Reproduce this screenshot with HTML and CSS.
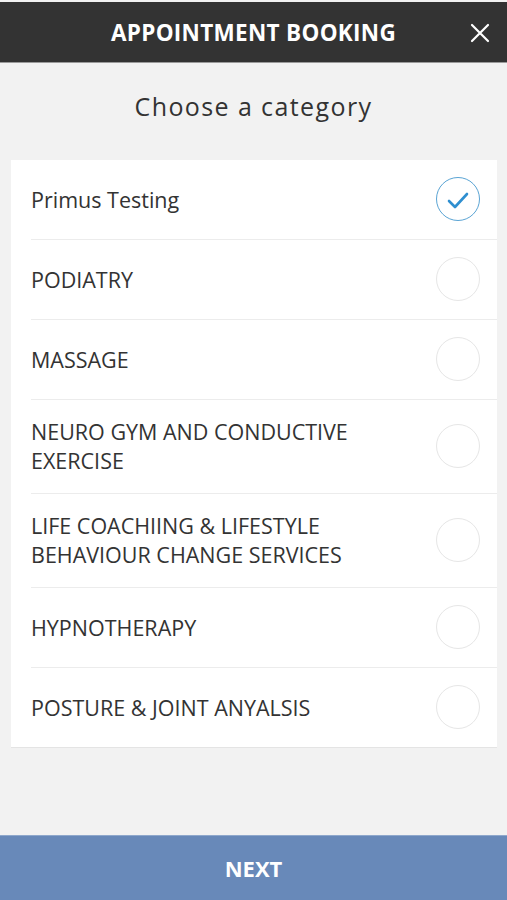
FILE: index.html
```html
<!DOCTYPE html>
<html lang="en">
<head>
    <meta charset="UTF-8">
    <meta name="viewport" content="width=device-width, initial-scale=1.0">
    <title>Appointment Booking</title>
    <link rel="stylesheet" href="styles.css">
</head>
<body>
    <div class="page">
        <header class="topbar">
            <h1 class="topbar-title">APPOINTMENT BOOKING</h1>
            <button class="close" aria-label="Close">
                <svg width="20" height="20" viewBox="0 0 20 20">
                    <path d="M2 2 L18 18 M18 2 L2 18" stroke="#fff" stroke-width="2.2" stroke-linecap="round"/>
                </svg>
            </button>
        </header>

        <h2 class="heading">Choose a category</h2>

        <ul class="list">
            <li class="item selected">
                <span class="label">Primus Testing</span>
                <span class="radio">
                    <svg width="24" height="24" viewBox="0 0 24 24">
                        <path d="M3 13 L9 19 L21 6" fill="none" stroke="#2f8fd0" stroke-width="2.6" stroke-linecap="round" stroke-linejoin="round"/>
                    </svg>
                </span>
            </li>
            <li class="item"><span class="label">PODIATRY</span><span class="radio"></span></li>
            <li class="item"><span class="label">MASSAGE</span><span class="radio"></span></li>
            <li class="item"><span class="label">NEURO GYM AND CONDUCTIVE<br>EXERCISE</span><span class="radio"></span></li>
            <li class="item"><span class="label">LIFE COACHIING &amp; LIFESTYLE<br>BEHAVIOUR CHANGE SERVICES</span><span class="radio"></span></li>
            <li class="item"><span class="label">HYPNOTHERAPY</span><span class="radio"></span></li>
            <li class="item"><span class="label">POSTURE &amp; JOINT ANYALSIS</span><span class="radio"></span></li>
        </ul>

        <button class="next">NEXT</button>
    </div>
</body>
</html>
```

FILE: styles.css
```css
html, body {
    margin: 0;
    padding: 0;
}
body {
    font-family: "Open Sans", "Liberation Sans", sans-serif;
    background: #f2f2f2;
    color: #333;
}
.page {
    height: 900px;
    display: flex;
    flex-direction: column;
}
.topbar {
    height: 60px;
    margin-top: 2px;
    background: #333333;
    display: flex;
    align-items: center;
    justify-content: center;
    position: relative;
    border-bottom: 1px solid #9a9a9a;
}
.topbar-title {
    margin: 0;
    color: #fff;
    font-size: 22.5px;
    font-weight: 700;
    letter-spacing: 0.3px;
}
.close {
    position: absolute;
    right: 17px;
    top: 21px;
    padding: 0;
    border: 0;
    background: none;
    width: 20px;
    height: 20px;
}
.heading {
    margin: 26px 0 0;
    height: 71px;
    text-align: center;
    font-size: 25px;
    font-weight: 400;
    letter-spacing: 1.4px;
    color: #333;
}
.list {
    list-style: none;
    margin: 0 10px 0 11px;
    padding: 0;
    background: #fff;
    border-bottom: 1px solid #e4e4e4;
}
.item {
    min-height: 80px;
    box-sizing: border-box;
    margin-left: 20px;
    padding: 17px 17px 18px 0;
    display: flex;
    align-items: center;
    justify-content: space-between;
    border-bottom: 1px solid #ececec;
}
.item:last-child {
    border-bottom: 0;
    min-height: 78px;
}
.label {
    font-size: 21.5px;
    line-height: 29px;
    color: #333;
}
.radio {
    width: 44px;
    height: 44px;
    box-sizing: border-box;
    border: 1px solid #e6e6e6;
    border-radius: 50%;
    flex-shrink: 0;
    display: flex;
    align-items: center;
    justify-content: center;
}
.selected .radio {
    border: 1.5px solid #5aa4d4;
}
.selected .radio svg {
    margin-top: 1px;
}
.next {
    margin-top: auto;
    height: 65px;
    border: 0;
    border-top: 1px solid #8fa8cc;
    background: #6889b9;
    color: #fff;
    font-family: "Open Sans", "Liberation Sans", sans-serif;
    font-size: 22px;
    font-weight: 700;
    width: 100%;
}
```
